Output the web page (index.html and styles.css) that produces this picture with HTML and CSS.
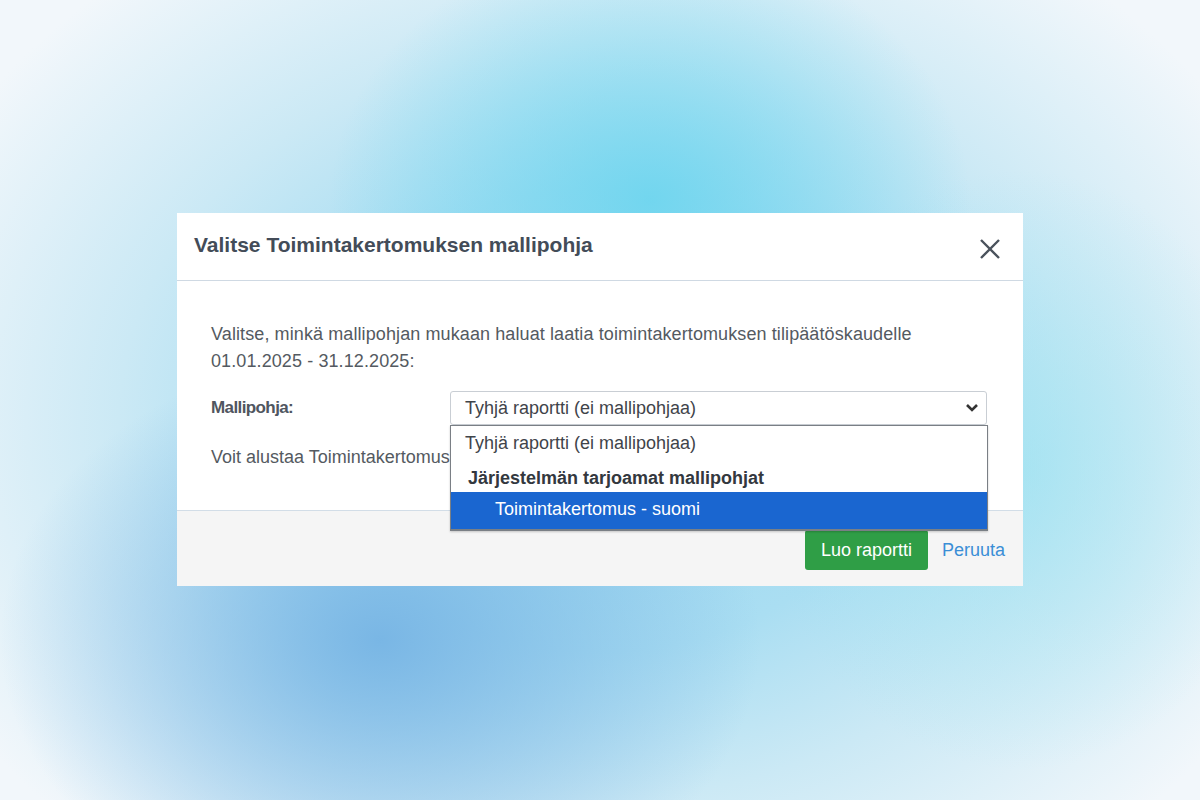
FILE: index.html
```html
<!DOCTYPE html>
<html lang="fi">
<head>
<meta charset="utf-8">
<title>Valitse Toimintakertomuksen mallipohja</title>
<link rel="stylesheet" href="styles.css">
</head>
<body>
<div class="stage">
  <div class="dialog">
    <div class="dialog-header">
      <h1 class="dialog-title">Valitse Toimintakertomuksen mallipohja</h1>
      <button class="close-btn" aria-label="Sulje">
        <svg width="22" height="22" viewBox="0 0 22 22"><path d="M2 2 L20 20 M20 2 L2 20" stroke="#4a525c" stroke-width="2.4" fill="none"/></svg>
      </button>
    </div>
    <div class="dialog-body">
      <p class="intro">Valitse, minkä mallipohjan mukaan haluat laatia toimintakertomuksen tilipäätöskaudelle<br>01.01.2025 - 31.12.2025:</p>
      <div class="form-row">
        <label class="form-label">Mallipohja:</label>
        <div class="select-wrap">
          <div class="select">
            <span>Tyhjä raportti (ei mallipohjaa)</span>
            <svg class="chev" width="14" height="10" viewBox="0 0 14 10"><path d="M2 2 L7 7 L12 2" stroke="#333" stroke-width="2.6" fill="none"/></svg>
          </div>
          <ul class="dropdown">
            <li class="opt">Tyhjä raportti (ei mallipohjaa)</li>
            <li class="group">Järjestelmän tarjoamat mallipohjat</li>
            <li class="opt sub selected">Toimintakertomus - suomi</li>
          </ul>
        </div>
      </div>
      <p class="note">Voit alustaa Toimintakertomus</p>
    </div>
    <div class="dialog-footer">
      <button class="btn-primary">Luo raportti</button>
      <a class="link" href="#">Peruuta</a>
    </div>
  </div>
</div>
</body>
</html>
```
FILE: styles.css
```css
* { box-sizing: border-box; }
html, body { margin: 0; padding: 0; }
body {
  width: 1200px;
  height: 800px;
  overflow: hidden;
  font-family: "Liberation Sans", Arial, sans-serif;
  background:
    radial-gradient(ellipse 320px 260px at 650px 200px, rgba(100,212,238,0.8), rgba(100,212,238,0) 100%),
    radial-gradient(ellipse 380px 290px at 380px 640px, rgba(118,180,228,0.95), rgba(118,180,228,0) 100%),
    radial-gradient(ellipse 260px 300px at 1020px 470px, rgba(150,226,240,0.6), rgba(150,226,240,0) 100%),
    radial-gradient(ellipse 740px 580px at 600px 420px, #98d6ef 0%, #aadef2 40%, #cbe9f5 65%, rgba(242,247,251,0) 100%),
    #f2f7fb;
}
.stage {
  height: 800px;
  display: flex;
  align-items: flex-start;
  justify-content: flex-start;
  padding: 213px 0 0 177px;
}
.dialog {
  width: 846px;
  background: #fff;
}
.dialog-header {
  height: 68px;
  display: flex;
  align-items: center;
  justify-content: space-between;
  padding: 0 22px 0 17px;
  border-bottom: 1px solid #cfd9e3;
}
.dialog-title {
  margin: 0;
  margin-top: -3px;
  font-size: 21px;
  font-weight: bold;
  color: #434c58;
}
.close-btn {
  background: none;
  border: 0;
  padding: 0;
  width: 22px;
  height: 22px;
  display: flex;
  margin-top: 4px;
}
.dialog-body {
  padding: 40px 36px 43px 34px;
  color: #545a61;
  font-size: 18px;
}
.intro {
  margin: 0;
  line-height: 27px;
  letter-spacing: 0.1px;
}
.form-row {
  display: flex;
  align-items: center;
  margin-top: 16px;
}
.form-label {
  width: 239px;
  font-weight: bold;
  font-size: 17px;
  letter-spacing: -0.6px;
  color: #505660;
}
.select-wrap {
  position: relative;
  flex: 1;
}
.select {
  height: 34px;
  border: 1px solid #c9ced4;
  border-radius: 3px;
  display: flex;
  align-items: center;
  justify-content: space-between;
  padding: 0 7px 0 14px;
  color: #3f444a;
}
.dropdown {
  position: absolute;
  top: 34px;
  left: 0;
  right: -1px;
  margin: 0;
  padding: 0;
  list-style: none;
  background: #fff;
  border: 1px solid #7a7f85;
  border-bottom-width: 2px;
  box-shadow: 0 1px 2px rgba(0,0,0,0.2);
  z-index: 2;
}
.dropdown li { padding: 0 14px; }
.dropdown .opt:first-child {
  height: 35px;
  line-height: 35px;
  color: #3f444a;
}
.dropdown .group {
  height: 31px;
  line-height: 34px;
  font-weight: bold;
  color: #33383e;
  padding-left: 17px;
}
.dropdown .sub {
  height: 37px;
  line-height: 35px;
  padding-left: 44px;
}
.dropdown .selected {
  background: #1a66d0;
  color: #fff;
}
.note {
  margin: 22px 0 0;
  line-height: 20px;
  white-space: nowrap;
}
.dialog-footer {
  background: #f5f5f5;
  border-top: 1px solid #d2dde7;
  height: 76px;
  display: flex;
  justify-content: flex-end;
  align-items: flex-start;
  padding: 19px 18px 0 0;
  gap: 14px;
}
.btn-primary {
  font-family: "Liberation Sans", Arial, sans-serif;
  background: #2f9e46;
  color: #fff;
  border: 0;
  border-radius: 3px;
  height: 40px;
  padding: 0 16px;
  font-size: 18px;
}
.link {
  color: #3a8ed6;
  text-decoration: none;
  font-size: 18px;
  line-height: 40px;
}
```
